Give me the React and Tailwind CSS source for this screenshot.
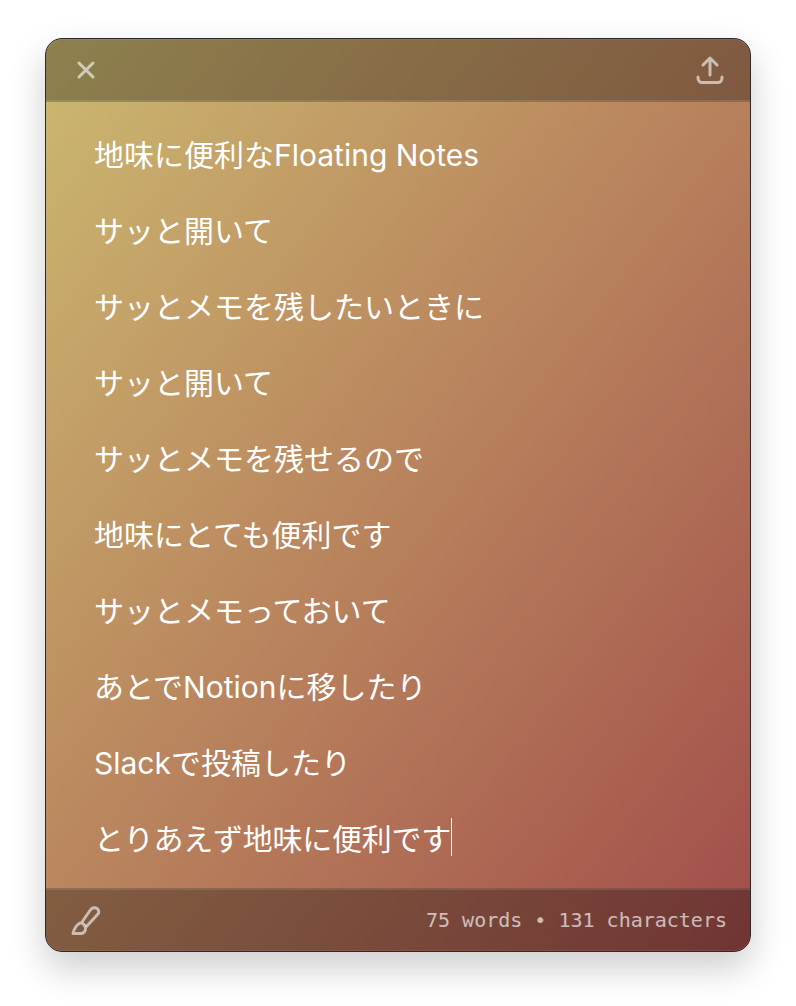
const lines = [
  '地味に便利なFloating Notes',
  'サッと開いて',
  'サッとメモを残したいときに',
  'サッと開いて',
  'サッとメモを残せるので',
  '地味にとても便利です',
  'サッとメモっておいて',
  'あとでNotionに移したり',
  'Slackで投稿したり',
  'とりあえず地味に便利です',
];

function CloseIcon() {
  return (
    <svg width="20" height="20" viewBox="0 0 20 20" fill="none" stroke="currentColor" strokeWidth="3" strokeLinecap="round">
      <path d="M3 3L17 17M17 3L3 17" />
    </svg>
  );
}

function UploadIcon() {
  return (
    <svg width="30" height="30" viewBox="0 0 30 30" fill="none" stroke="currentColor" strokeWidth="3" strokeLinecap="round" strokeLinejoin="round">
      <path d="M15 3V20M8 10L15 3L22 10" />
      <path d="M3 22V23C3 26 5 27.5 7 27.5H23C25 27.5 27 26 27 23V22" />
    </svg>
  );
}

function BrushIcon() {
  return (
    <svg width="32" height="32" viewBox="0 0 32 32" fill="none" stroke="currentColor" strokeWidth="3" strokeLinejoin="round">
      <path d="M12 18L20 6.5C22 3.5 25 3 27 4.5C29 6 29.5 8.5 27.5 10.5L16 23" />
      <path d="M10 19C6.5 21 4 25 3 29.5H11.5C14 29 16 26.500 15.500 24C15 21 12.500 18.500 10 19Z" />
    </svg>
  );
}

export default function App() {
  return (
    <div className="w-[796px] h-[1006px] bg-white pt-[38px] pl-[45px] font-['Inter','Noto_Sans_CJK_JP',sans-serif]">
      <div className="w-[706px] h-[914px] flex flex-col overflow-hidden rounded-[17px] border border-[#2a2a2a] bg-linear-to-br from-[#cbb970] to-[#a14c4a] shadow-[0_16px_36px_rgba(0,0,0,0.2),inset_0_1px_0_rgba(255,255,255,0.15),inset_0_-1px_0_rgba(255,255,255,0.15)]">
        {/* Header */}
        <div className="h-[63px] shrink-0 flex items-center justify-between pl-[30px] pr-[25px] bg-black/30 border-b-2 border-white/10 text-white/60">
          <CloseIcon />
          <UploadIcon />
        </div>

        {/* Note */}
        <div className="flex-1 flex flex-col gap-[38px] pt-[34px] pl-[48px] text-white text-[30px] leading-[38px]">
          {lines.map((line, i) => {
            const isLast = i === lines.length - 1;
            return (
              <div key={i} className={`flex items-center whitespace-nowrap ${isLast ? 'tracking-[-0.25px]' : ''}`}>
                <span>{line}</span>
                {isLast && <span className="inline-block w-px h-[38px] -mt-[4px] bg-white" />}
              </div>
            );
          })}
        </div>

        {/* Footer */}
        <div className="h-[63px] shrink-0 flex items-center justify-between pl-[24px] pr-[23px] pb-[2px] bg-black/30 border-t-2 border-white/10 text-white/60">
          <BrushIcon />
          <span className="font-['DejaVu_Sans_Mono','Liberation_Mono',monospace] text-[20px] leading-[24px] text-white/65">75 words • 131 characters</span>
        </div>
      </div>
    </div>
  );
}
